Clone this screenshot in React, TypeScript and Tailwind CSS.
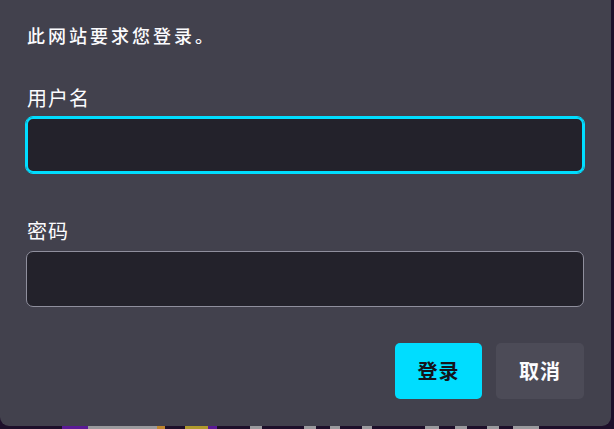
import React from 'react'

const strip = [
  { w: 62, c: 'bg-[#1d0f2a]' },
  { w: 26, c: 'bg-[#5b1a96]' },
  { w: 69, c: 'bg-[#9a9a9e]' },
  { w: 8, c: 'bg-[#c0862e]' },
  { w: 20, c: 'bg-[#1d0f2a]' },
  { w: 23, c: 'bg-[#b09a2c]' },
  { w: 9, c: 'bg-[#5b1a96]' },
  { w: 33, c: 'bg-[#1d0f2a]' },
  { w: 12, c: 'bg-[#9a9a9e]' },
  { w: 42, c: 'bg-[#1d0f2a]' },
  { w: 12, c: 'bg-[#9a9a9e]' },
  { w: 14, c: 'bg-[#1d0f2a]' },
  { w: 10, c: 'bg-[#9a9a9e]' },
  { w: 22, c: 'bg-[#1d0f2a]' },
  { w: 10, c: 'bg-[#9a9a9e]' },
  { w: 53, c: 'bg-[#1d0f2a]' },
  { w: 14, c: 'bg-[#9a9a9e]' },
  { w: 16, c: 'bg-[#1d0f2a]' },
  { w: 12, c: 'bg-[#9a9a9e]' },
  { w: 20, c: 'bg-[#1d0f2a]' },
  { w: 12, c: 'bg-[#9a9a9e]' },
  { w: 14, c: 'bg-[#1d0f2a]' },
  { w: 26, c: 'bg-[#9a9a9e]' },
]

export default function App() {
  return (
    <div
      className="flex h-[429px] w-[614px] flex-col overflow-hidden bg-[#1d0f2a] text-[#fbfbfe]"
      style={{ fontFamily: '"Noto Sans CJK SC", "Noto Sans", sans-serif' }}
    >
      <div className="flex h-[426px] w-[611px] shrink-0 flex-col rounded-b-[9px] bg-[#42414d] pl-[27px] pr-[27px] pt-[23px]">
        <p className="text-[18px] font-medium leading-[24px] tracking-[3px]">此网站要求您登录。</p>

        <label className="mt-[37px] text-[20px] leading-[28px] tracking-[1px]">用户名</label>
        <input
          type="text"
          className="-ml-px mt-[5px] h-[56px] w-[calc(100%+1px)] rounded-[7px] border-2 border-[#00ddff] bg-[#23222b] outline outline-1 outline-[#00ddff]"
        />

        <label className="mt-[44px] text-[20px] leading-[28px] tracking-[1px]">密码</label>
        <input
          type="password"
          className="-ml-px mt-[6px] h-[56px] w-[calc(100%+1px)] rounded-[7px] border border-[#8f8f9d] bg-[#23222b] outline-none"
        />

        <div className="mt-[36px] flex justify-end gap-[14px]">
          <button className="h-[56px] w-[87px] rounded-[5px] bg-[#00ddff] text-[20px] font-bold tracking-[1px] text-[#15141a]">
            登录
          </button>
          <button className="h-[56px] w-[88px] rounded-[5px] bg-[#4c4b57] text-[20px] font-bold tracking-[1px] text-[#fbfbfe]">
            取消
          </button>
        </div>
      </div>
      <div className="flex h-[3px] shrink-0">
        {strip.map((s, i) => (
          <div key={i} className={s.c} style={{ width: s.w }} />
        ))}
      </div>
    </div>
  )
}
